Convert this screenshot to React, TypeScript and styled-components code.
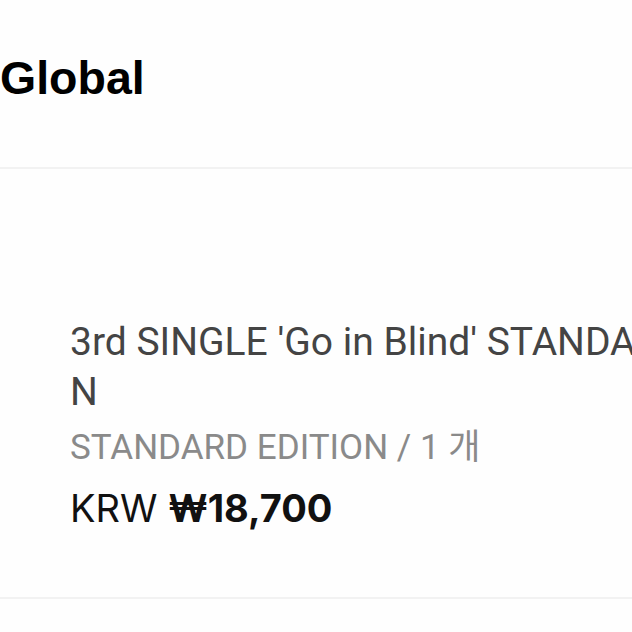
import React from "react";
import styled, { createGlobalStyle } from "styled-components";

const GlobalStyle = createGlobalStyle`
  html, body {
    margin: 0;
    padding: 0;
    background: #fefefe;
    overflow: hidden;
  }
  body {
    width: 632px;
    height: 632px;
  }
`;

const Page = styled.div`
  width: 632px;
  height: 632px;
  overflow: hidden;
  display: flex;
  flex-direction: column;
`;

const Header = styled.header`
  height: 169px;
  flex-shrink: 0;
  display: flex;
  align-items: flex-start;
  padding-top: 50px;
  box-sizing: border-box;
  border-bottom: 2px solid #f2f2f2;
`;

const Brand = styled.h1`
  margin: 0;
  font-family: "Liberation Sans", Arial, sans-serif;
  font-weight: 700;
  font-size: 46.5px;
  line-height: 56px;
  color: #000;
`;

const Item = styled.section`
  height: 430px;
  flex-shrink: 0;
  box-sizing: border-box;
  padding: 148px 0 0 70px;
  border-bottom: 2px solid #f2f2f2;
  display: flex;
  flex-direction: column;
  align-items: flex-start;
`;

const Title = styled.div`
  width: 760px;
  flex-shrink: 0;
  font-family: Roboto, "Noto Sans", sans-serif;
  font-size: 39px;
  line-height: 50px;
  color: #444;
  word-break: break-all;
`;

const Option = styled.div`
  margin-top: 9px;
  font-family: Roboto, "Noto Sans CJK KR", sans-serif;
  font-size: 35px;
  line-height: 44px;
  color: #8a8a8a;
`;

const Price = styled.div`
  margin-top: 14px;
  font-family: Inter, Roboto, sans-serif;
  font-size: 38px;
  line-height: 48px;
  color: #111;
`;

const Amount = styled.span`
  font-weight: 700;
`;

export default function App() {
  return (
    <>
      <GlobalStyle />
      <Page>
        <Header>
          <Brand>Global</Brand>
        </Header>
        <Item>
          <Title>3rd SINGLE 'Go in Blind' STANDARD EDITION</Title>
          <Option>STANDARD EDITION / 1 개</Option>
          <Price>
            KRW <Amount>₩18,700</Amount>
          </Price>
        </Item>
      </Page>
    </>
  );
}
